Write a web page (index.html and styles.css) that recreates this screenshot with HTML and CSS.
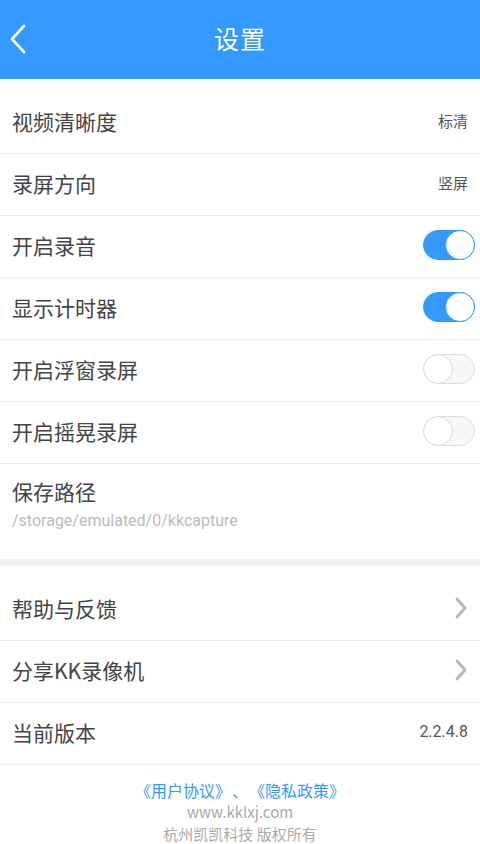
FILE: index.html
```html
<!DOCTYPE html>
<html lang="zh">

<head>
    <meta charset="UTF-8" />
    <meta name="viewport" content="width=device-width, initial-scale=1.0" />
    <title>设置</title>
    <link rel="stylesheet" href="styles.css">
</head>

<body>
    <div class="wrapper">
        <div class="header">
            <button class="btn-back">
                <svg width="18" height="30" viewBox="0 0 18 30">
                    <path d="M15 2 L3 15 L15 28" fill="none" stroke="#fff" stroke-width="2.6" stroke-linecap="round" stroke-linejoin="round" />
                </svg>
            </button>
            <h1>设置</h1>
        </div>

        <!-- 录制设置 -->
        <div class="section">
            <div class="row">
                <span class="label">视频清晰度</span>
                <span class="value">标清</span>
            </div>
            <div class="row">
                <span class="label">录屏方向</span>
                <span class="value">竖屏</span>
            </div>
            <div class="row">
                <span class="label">开启录音</span>
                <span class="switch on"></span>
            </div>
            <div class="row">
                <span class="label">显示计时器</span>
                <span class="switch on"></span>
            </div>
            <div class="row">
                <span class="label">开启浮窗录屏</span>
                <span class="switch"></span>
            </div>
            <div class="row">
                <span class="label">开启摇晃录屏</span>
                <span class="switch"></span>
            </div>
            <div class="row row-path">
                <span class="label">保存路径</span>
                <span class="path">/storage/emulated/0/kkcapture</span>
            </div>
        </div>

        <div class="section">
            <div class="row">
                <span class="label">帮助与反馈</span>
                <svg class="arrow" width="14" height="22" viewBox="0 0 14 22">
                    <path d="M3 2 L11 11 L3 20" fill="none" stroke="#b5b5b5" stroke-width="2.8" stroke-linecap="round" stroke-linejoin="round" />
                </svg>
            </div>
            <div class="row">
                <span class="label">分享KK录像机</span>
                <svg class="arrow" width="14" height="22" viewBox="0 0 14 22">
                    <path d="M3 2 L11 11 L3 20" fill="none" stroke="#b5b5b5" stroke-width="2.8" stroke-linecap="round" stroke-linejoin="round" />
                </svg>
            </div>
            <div class="row">
                <span class="label">当前版本</span>
                <span class="value version">2.2.4.8</span>
            </div>
        </div>

        <div class="footer">
            <p class="links"><a href="#">《用户协议》</a> 、 <a href="#">《隐私政策》</a></p>
            <p>www.kklxj.com</p>
            <p>杭州凯凯科技 版权所有</p>
        </div>
    </div>
</body>

</html>
```

FILE: styles.css
```css
* {
    box-sizing: border-box;
}

html,
body {
    margin: 0;
    padding: 0;
    font-family: "Noto Sans CJK SC", Roboto, sans-serif;
    background: #ffffff;
    width: 100vw;
    height: 100vh;
    overflow: hidden;
}

.wrapper {
    width: 100%;
    height: 100vh;
    background: #ffffff;
}

.header {
    position: relative;
    height: 79px;
    padding-bottom: 4px;
    background: #3399ff;
    display: flex;
    justify-content: center;
    align-items: center;
}

.header h1 {
    margin: 0;
    color: #fff;
    font-size: 25px;
    font-weight: normal;
    letter-spacing: 1px;
}

.btn-back {
    position: absolute;
    left: 6px;
    top: 24px;
    background: none;
    border: none;
    padding: 0;
    width: 24px;
    height: 30px;
}

.section {
    padding-top: 13px;
}

.section+.section {
    border-top: 7px solid #f0f0f0;
}

.row {
    height: 62px;
    padding: 0 12px 4px;
    display: flex;
    justify-content: space-between;
    align-items: center;
    border-bottom: 1px solid #ebebeb;
}

.label {
    font-size: 21px;
    color: #444;
}

.value {
    font-size: 15px;
    color: #555;
}

.version {
    font-family: Roboto, sans-serif;
    font-size: 16px;
}

.row-path {
    height: 95px;
    flex-direction: column;
    align-items: flex-start;
    justify-content: flex-start;
    padding-top: 12px;
    border-bottom: none;
}

.path {
    margin-top: 5px;
    font-family: Roboto, sans-serif;
    font-size: 16px;
    color: #bbb;
}

.arrow {
    margin-right: 0;
}

.switch {
    position: relative;
    width: 52px;
    height: 30px;
    margin-right: -7px;
    border-radius: 15px;
    background: #f7f7f7;
    border: 1px solid #dedede;
}

.switch::after {
    content: "";
    position: absolute;
    top: -1px;
    left: -1px;
    width: 30px;
    height: 30px;
    box-sizing: border-box;
    border-radius: 50%;
    background: #fff;
    border: 1px solid #dcdcdc;
}

.switch.on {
    background: #3399ff;
    border-color: #3399ff;
}

.switch.on::after {
    left: auto;
    right: -1px;
    border-color: #3399ff;
}

.footer {
    padding-top: 14px;
    text-align: center;
    color: #aaa;
    font-size: 15px;
}

.footer p {
    margin: 0;
    line-height: 22px;
}

.footer .links {
    color: #3399ff;
    font-size: 16px;
    word-spacing: -2.5px;
}

.footer a {
    color: #3399ff;
    text-decoration: none;
}
```
